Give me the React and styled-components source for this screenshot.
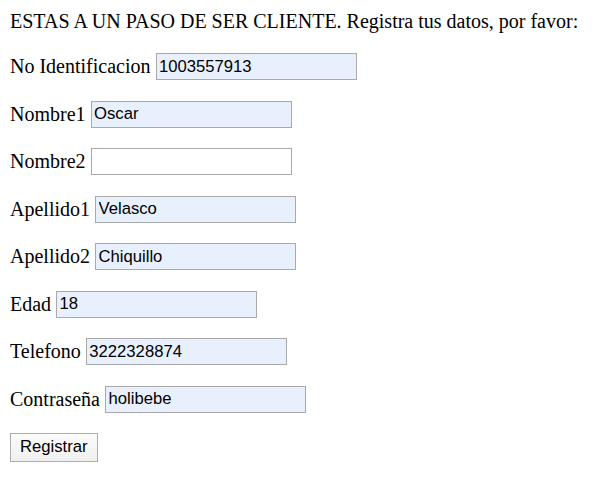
import styled, { createGlobalStyle } from "styled-components";

const GlobalStyle = createGlobalStyle`
  body {
    margin: 10px;
    font-family: "Liberation Serif", "Times New Roman", serif;
    font-size: 20px;
    color: #000;
    background: #fff;
  }
`;

const Intro = styled.div`
  line-height: 23px;
`;

const Row = styled.p`
  margin: 20px 0;
  display: flex;
  align-items: center;
  gap: 5px;
  height: 27.5px;
`;

const Field = styled.input`
  box-sizing: border-box;
  width: 201px;
  height: 27px;
  margin: 0;
  padding: 1px 2.5px;
  border: 1px solid #a9a9a9;
  background: ${(p) => (p.$filled ? "#e8f0fe" : "#fff")};
  font-family: "Liberation Sans", Arial, sans-serif;
  font-size: 16.67px;
  color: #000;
  outline: none;
`;

const SubmitButton = styled.button`
  box-sizing: border-box;
  height: 29px;
  margin-top: 1px;
  padding: 1px 9px;
  border: 1px solid #adadad;
  background: linear-gradient(#fcfcfc, #efefef);
  font-family: "Liberation Sans", Arial, sans-serif;
  font-size: 16.67px;
  color: #000;
`;

const fields = [
  ["No Identificacion", "1003557913"],
  ["Nombre1", "Oscar"],
  ["Nombre2", ""],
  ["Apellido1", "Velasco"],
  ["Apellido2", "Chiquillo"],
  ["Edad", "18"],
  ["Telefono", "3222328874"],
  ["Contraseña", "holibebe"],
];

export default function App() {
  return (
    <>
      <GlobalStyle />
      <Intro>ESTAS A UN PASO DE SER CLIENTE. Registra tus datos, por favor:</Intro>
      <form onSubmit={(e) => e.preventDefault()}>
        {fields.map(([label, value]) => (
          <Row key={label}>
            <span>{label}</span>
            <Field defaultValue={value} $filled={value !== ""} />
          </Row>
        ))}
        <Row>
          <SubmitButton type="submit">Registrar</SubmitButton>
        </Row>
      </form>
    </>
  );
}
